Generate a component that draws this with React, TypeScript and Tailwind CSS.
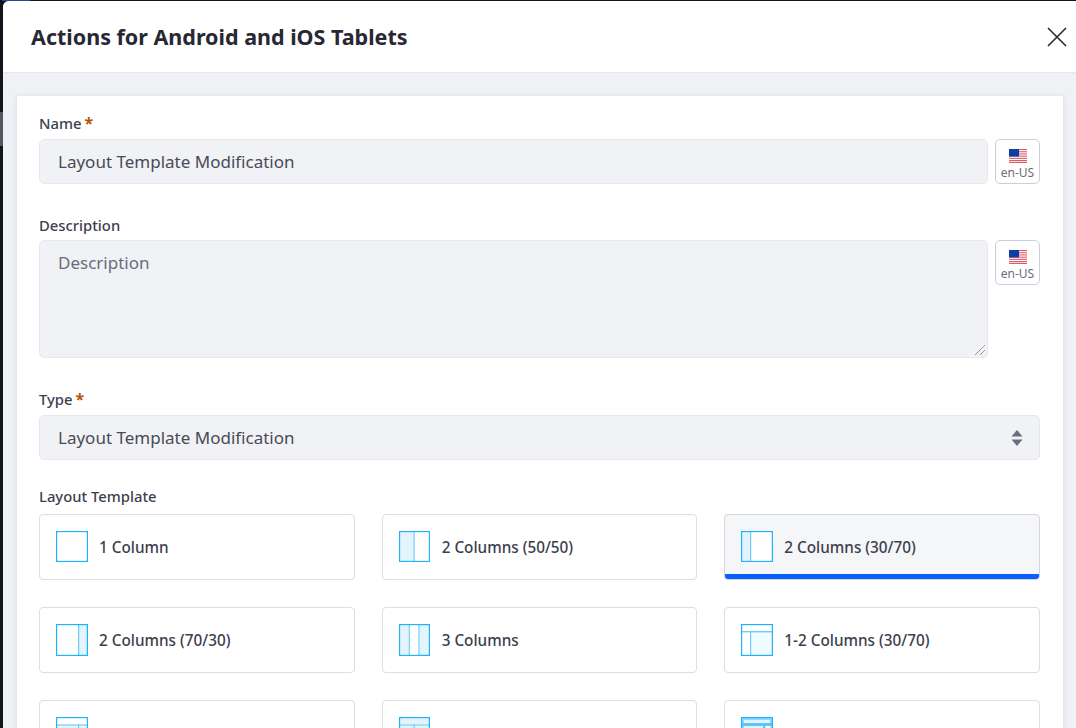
const font = "font-['Noto_Sans',sans-serif]";

function Flag() {
  return (
    <svg width="18" height="14" viewBox="0 0 18 14" className="block">
      <rect width="18" height="14" fill="#fff" />
      {[0, 2.2, 4.4, 6.6, 8.8, 11, 12.9].map((y) => (
        <rect key={y} y={y} width="18" height="1.1" fill="#df5a66" />
      ))}
      <rect width="10" height="7.5" fill="#0b3fa5" />
    </svg>
  );
}

function LangButton() {
  return (
    <div className="w-[45px] h-[45px] shrink-0 rounded-[5px] border border-[#cdced9] bg-white flex flex-col items-center pt-[9px] gap-[3px]">
      <Flag />
      <span className="text-[12px] leading-[14px] text-[#6b6c7e]">en-US</span>
    </div>
  );
}

function Label({ text, required }: { text: string; required?: boolean }) {
  return (
    <div className={`text-[14.8px] leading-[20px] font-medium text-[#3c3e4d] flex ${required ? "-mt-px mb-[6px]" : "mb-[5px]"}`}>
      {text}
      {required && <span className="ml-[3px] text-[#b95000] font-bold text-[16px]">*</span>}
    </div>
  );
}

function Icon({ kind, narrow, short }: { kind: string; narrow?: boolean; short?: boolean }) {
  const b = "#1fb3ff";
  const l = "#6fcdf9";
  const band = "#a5dffb";
  const f = "#e3f4fc";
  const g = "#eefbff";
  const svg = (children: React.ReactNode) => (
    <svg
      viewBox="0 0 32 32"
      preserveAspectRatio="none"
      className={`shrink-0 block ${narrow ? "w-[31px] mr-px" : "w-[32px]"} ${short ? "h-[31px] mb-px" : "h-[32px]"}`}
    >
      <rect width="32" height="32" fill="#fff" />
      {children}
      <rect x="0.6" y="0.6" width="30.8" height="30.8" fill="none" stroke={b} strokeWidth="1.2" />
    </svg>
  );
  switch (kind) {
    case "50":
      return svg(<><rect width="15.5" height="32" fill={f} /><rect x="15" width="1.2" height="32" fill={l} /></>);
    case "30":
      return svg(<><rect width="9.5" height="32" fill={f} /><rect x="9" width="1.2" height="32" fill={l} /></>);
    case "70":
      return svg(<><rect x="22" width="10" height="32" fill={f} /><rect x="22" width="1.2" height="32" fill={l} /></>);
    case "3":
      return svg(<><rect width="10" height="32" fill={f} /><rect x="21" width="11" height="32" fill={f} /><rect x="10" width="1.2" height="32" fill={l} /><rect x="20" width="1.2" height="32" fill={l} /></>);
    case "12":
      return svg(<><rect x="9" y="7" width="23" height="25" fill={g} /><rect y="7" width="32" height="1.4" fill={l} /><rect x="9" y="7" width="1.2" height="25" fill={l} /></>);
    case "a":
      return svg(<><rect y="7" width="32" height="25" fill={f} /><rect y="7" width="32" height="2" fill={band} /><rect x="22" y="7" width="1.2" height="25" fill={l} /></>);
    case "b":
      return svg(<><rect width="32" height="32" fill={f} /><rect y="7" width="32" height="2" fill={band} /><rect x="15" y="7" width="1.2" height="25" fill={l} /></>);
    case "c":
      return svg(<><rect width="32" height="32" fill={f} /><rect x="0" y="0" width="32" height="3" fill="#8ed8fd" /><rect x="0" y="0" width="3" height="32" fill="#8ed8fd" /><rect x="29" y="0" width="3" height="32" fill="#8ed8fd" /><rect y="6" width="32" height="3" fill="#5cc6fb" /><rect x="22" y="6" width="2.5" height="26" fill="#5cc6fb" /><rect x="24.5" y="9" width="5" height="23" fill="#fff" /></>);
    default:
      return svg(null);
  }
}

function Card({ kind, text, active, narrow, short }: { kind: string; text: string; active?: boolean; narrow?: boolean; short?: boolean }) {
  return (
    <div className={`h-[66px] rounded-[4px] border relative overflow-hidden flex items-center pl-[16px] gap-[11px] ${active ? "bg-[#f5f6f8] border-[#d5d6dc]" : "bg-white border-[#dedede]"}`}>
      <Icon kind={kind} narrow={narrow} short={short} />
      <span className="text-[15.3px] font-medium text-[#3c3e4d] whitespace-nowrap">{text}</span>
      {active && <div className="absolute left-0 right-0 bottom-0 h-[5px] bg-[#0b5fff]" />}
    </div>
  );
}

export default function App() {
  return (
    <div className={`w-[1076px] h-[728px] overflow-hidden bg-[#14141c] relative ${font}`}>
      <div className="absolute left-0 top-[112px] w-[3px] h-[34px] bg-[#55565f]" />
      <div className="absolute left-[2px] top-0 w-[28px] h-px bg-[#1d4f91]" />
      <div className="h-full ml-[3px] mt-px rounded-tl-[6px] bg-[#f0f1f5] flex flex-col overflow-hidden">
        <header className="h-[72px] shrink-0 bg-white border-b border-[#e7e7ed] flex items-center justify-between pl-[28px] pr-[9px]">
          <h1 className="text-[21.5px] font-bold text-[#272833] mt-[2px]">Actions for Android and iOS Tablets</h1>
          <svg width="20" height="20" viewBox="0 0 20 20">
            <path d="M1 1 L19 19 M19 1 L1 19" stroke="#272833" strokeWidth="1.6" fill="none" />
          </svg>
        </header>
        <main className="flex-1 pt-[23px] pl-[14px] pr-[13px]">
          <div className="bg-white shadow-[0_1px_5px_rgba(0,0,0,0.12)] pt-[18px] pl-[22px] pr-[23px] pb-[40px]">
            <Label text="Name" required />
            <div className="flex gap-[7px]">
              <div className="flex-1 h-[45px] rounded-[5px] border border-[#e7e7ed] bg-[#f1f2f5] flex items-center pl-[18px] text-[17px] text-[#494a57]">Layout Template Modification</div>
              <LangButton />
            </div>
            <div className="mt-[31px]"><Label text="Description" /></div>
            <div className="flex gap-[7px] items-start">
              <div className="flex-1 h-[118px] rounded-[5px] border border-[#e7e7ed] bg-[#f1f2f5] pl-[18px] pt-[9px] text-[17px] text-[#6b6c7e] relative">
                Description
                <svg width="12" height="12" viewBox="0 0 12 12" className="absolute right-px bottom-px">
                  <path d="M1 11 L11 1 M6 11 L11 6" stroke="#55565f" strokeWidth="0.8" strokeDasharray="1 0.5" fill="none" />
                </svg>
              </div>
              <LangButton />
            </div>
            <div className="mt-[32px]"><Label text="Type" required /></div>
            <div className="h-[45px] rounded-[5px] border border-[#e7e7ed] bg-[#f1f2f5] flex items-center justify-between pl-[18px] pr-[16px] text-[17px] text-[#494a57]">
              Layout Template Modification
              <svg width="12" height="18" viewBox="0 0 12 18">
                <path d="M6 1 L11.5 7.5 H0.5 Z M0.5 10.5 H11.5 L6 17 Z" fill="#6b6c7e" />
              </svg>
            </div>
            <div className="mt-[26px] mb-[8px]"><Label text="Layout Template" /></div>
            <div className="grid grid-cols-3 gap-x-[27px] gap-y-[27px]">
              <Card kind="1" text="1 Column" short />
              <Card kind="50" text="2 Columns (50/50)" narrow short />
              <Card kind="30" text="2 Columns (30/70)" active short />
              <Card kind="70" text="2 Columns (70/30)" />
              <Card kind="3" text="3 Columns" narrow />
              <Card kind="12" text="1-2 Columns (30/70)" />
              <Card kind="a" text="" />
              <Card kind="b" text="" narrow />
              <Card kind="c" text="" />
            </div>
          </div>
        </main>
      </div>
    </div>
  );
}
